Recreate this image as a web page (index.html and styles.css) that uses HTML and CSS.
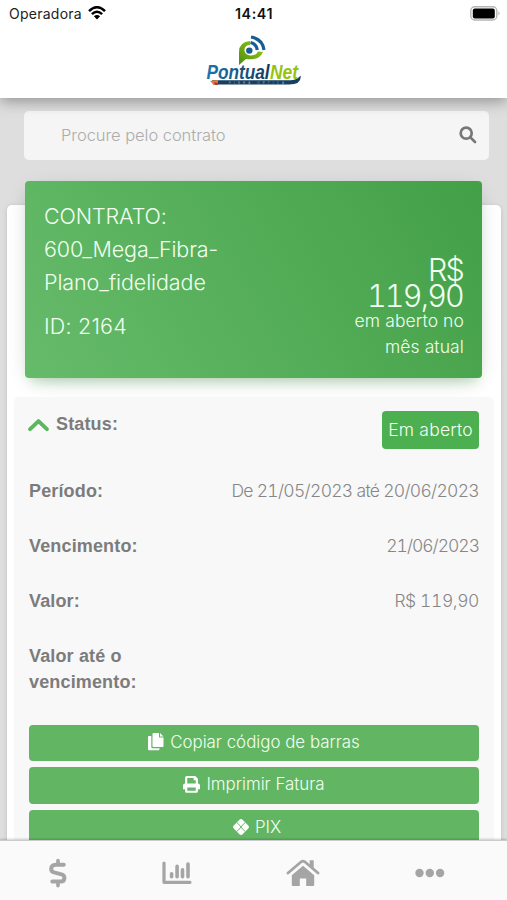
FILE: index.html
```html
<!DOCTYPE html>
<html lang="pt-BR">
<head>
<meta charset="utf-8">
<title>PontualNet</title>
<link rel="stylesheet" href="styles.css">
</head>
<body>
<div class="app">
  <header class="header">
    <div class="statusbar">
      <div class="carrier"><span>Operadora</span>
        <svg class="wifi" viewBox="0 0 18 14"><path d="M1 5.2Q9-2.6 17 5.2M3.9 8.1Q9 3.3 14.1 8.1" fill="none" stroke="#000" stroke-width="2.5"/><path d="M5.9 10.3Q9 7.8 12.1 10.3L9 13.5Z"/></svg>
      </div>
      <div class="clock">14:41</div>
      <div class="battery-slot"><svg class="battery" viewBox="0 0 31 15"><rect x=".8" y=".8" width="26" height="13.2" rx="4" fill="#fff" stroke="#b5b5b5" stroke-width="1.4"/><rect x="2.8" y="2.6" width="22" height="9.8" rx="2"/><path d="M28.5 5.2Q30.6 7.3 28.5 9.6Z" fill="#aaa"/></svg></div>
    </div>
    <svg class="logo" viewBox="0 0 98 52">
      <defs>
        <linearGradient id="leaf" x1="0" y1="1" x2="1" y2="0"><stop offset="0" stop-color="#4b8d12"/><stop offset="1" stop-color="#a2cc14"/></linearGradient>
        <linearGradient id="name" x1="0" y1="0" x2="1" y2="0"><stop offset="0" stop-color="#1b76ad"/><stop offset="1" stop-color="#143a5d"/></linearGradient>
      </defs>
      <path d="M45 6Q34 7 34 17V30L41 24Q54 26 58 17L53 16.5Q51 21 45 20.5Q39 19 39.5 14.5Q40 10 45 10Z" fill="url(#leaf)"/>
      <circle cx="44.3" cy="15.6" r="3.2" fill="#155d92"/>
      <path d="M45.5 7.5Q51.5 9 52.3 15M46 2Q57.5 4 59 15" fill="none" stroke="#155d92" stroke-width="3.2"/>
      <path d="M7 45.2H86Q93 44.5 95.5 40.5Q97 49.5 84 49.5H8Z" fill="#173f61"/>
      <text class="logo-name" x="1.5" y="44" textLength="63" lengthAdjust="spacingAndGlyphs" fill="url(#name)">Pontual</text>
      <text class="logo-name" x="65" y="44" textLength="28" lengthAdjust="spacingAndGlyphs" fill="#96c30c">Net</text>
      <path d="M5 46L13 45V50L8 49Z" fill="#ed7b29"/><path d="M9 47L13 48V50H10Z" fill="#c53328"/>
      <text class="logo-tag" x="24" y="48.8" textLength="55">FIBRA OPTICA</text>
    </svg>
  </header>

  <main class="content">
    <div class="search"><span class="placeholder">Procure pelo contrato</span>
      <svg class="search-icon" viewBox="0 0 18 18"><circle cx="7.2" cy="7.2" r="5.5"/><path d="M11.4 11.4L16 16"/></svg>
    </div>
    <section class="card">
      <div class="contract">
        <div class="contract-info">
          <p class="contract-name">CONTRATO:<br>600_Mega_Fibra-<br>Plano_fidelidade</p>
          <p class="contract-id">ID: 2164</p>
        </div>
        <div class="contract-due">
          <p class="amount">R$<br>119,90</p>
          <p class="due-note">em aberto no<br>mês atual</p>
        </div>
      </div>
      <div class="invoice">
        <div class="row row-status">
          <div class="status-label"><svg class="chevron" viewBox="0 0 22 14"><path d="M2.2 11.4L11 2.9L19.8 11.4"/></svg><b class="label">Status:</b></div>
          <span class="badge">Em aberto</span>
        </div>
        <div class="row"><b class="label">Período:</b><span class="value period">De 21/05/2023 até 20/06/2023</span></div>
        <div class="row"><b class="label">Vencimento:</b><span class="value due-date">21/06/2023</span></div>
        <div class="row"><b class="label">Valor:</b><span class="value">R$ 119,90</span></div>
        <div class="row row-tall"><b class="label">Valor até o<br>vencimento:</b></div>
        <div class="actions">
          <button class="action"><svg class="i-copy" viewBox="0 0 16 18"><path d="M5.5 0H11V4.5H15.5V13Q15.5 14 14.5 14H5.5Q4.5 14 4.5 13V1Q4.5 0 5.5 0ZM12 0L15.5 3.5H12ZM0 4Q0 3 1 3H3.3V14Q3.3 15.2 4.5 15.2H11.5V16.3Q11.5 17.3 10.5 17.3H1Q0 17.3 0 16.3Z"/></svg><span>Copiar código de barras</span></button>
          <button class="action"><svg class="i-print" viewBox="0 0 18 18"><path fill-rule="evenodd" d="M2.2 8V2Q2.2 0 4 0H13L15.8 2.8V8Q18 8 18 10V14H15.8V16.2Q15.8 17.8 14.2 17.8H3.8Q2.2 17.8 2.2 16.2V14H0V10Q0 8 2.2 8ZM4.5 2.2V8H13.5V4.5H11.3V2.2ZM4.5 12.3V15.6H13.5V12.3Z"/></svg><span>Imprimir Fatura</span></button>
          <button class="action"><svg class="i-pix" viewBox="0 0 17 17"><path d="M8.5 0Q9.5 0 10.2.8L16.2 6.8Q17.7 8.5 16.2 10.2L10.2 16.2Q8.5 17.7 6.8 16.2L.8 10.2Q-.7 8.5.8 6.8L6.8.8Q7.5 0 8.5 0Z"/><path class="cross" d="M3.9 3.9Q5.3 4.2 8.5 8.5Q11.7 4.2 13.1 3.9M3.9 13.1Q5.3 12.8 8.5 8.5Q11.7 12.8 13.1 13.1"/></svg><span>PIX</span></button>
        </div>
      </div>
    </section>
  </main>

  <nav class="tabs">
    <svg class="tab-money" viewBox="0 0 18 30"><path d="M14.8 6.8H7Q2.2 7 2.2 11Q2.2 13.7 5 14.4L12.5 16.4Q15.4 17.2 15.4 20Q15.4 23.6 11.5 23.6H3.3" fill="none" stroke="#a5a5a5" stroke-width="4" stroke-linecap="round" stroke-linejoin="round"/><path d="M9 2.5V6M9 24V27.8" stroke="#a5a5a5" stroke-width="3.6" stroke-linecap="round"/></svg>
    <svg class="tab-chart" viewBox="0 0 30 24"><path d="M2 2V21.3H28" fill="none" stroke="#a5a5a5" stroke-width="3.2" stroke-linecap="round" stroke-linejoin="round"/><path d="M9.6 12.7V15.7M15.1 5.2V15.7M20.5 8.8V15.7M26 3V15.7" stroke="#a5a5a5" stroke-width="3.6" stroke-linecap="round"/></svg>
    <svg class="tab-home" viewBox="0 0 34 28"><path d="M2 14L15.2 2.8Q17 1.4 18.8 2.8L32 14" fill="none" stroke="#a5a5a5" stroke-width="2.8" stroke-linecap="round"/><path d="M23.7 1.2H27.7V9.5L23.7 6.1ZM17 6.8L28.2 16.3V26Q28.2 27 27.2 27H20.2V19.5H13.8V27H6.8Q5.8 27 5.8 26V16.3Z" fill="#a5a5a5"/></svg>
    <svg class="tab-more" viewBox="0 0 30 10"><g fill="#a5a5a5"><circle cx="4.5" cy="5" r="4.2"/><circle cx="14.8" cy="5" r="4.2"/><circle cx="25.1" cy="5" r="4.2"/></g></svg>
  </nav>
</div>
</body>
</html>
```
FILE: styles.css
```css
* { box-sizing: border-box; }
body { margin: 0; font-family: Inter, "Liberation Sans", sans-serif; font-weight: 300; }
p { margin: 0; }
svg { display: block; flex: none; }
.app { height: 900px; width: 507px; display: flex; flex-direction: column; overflow: hidden; background: #dedede; }

.header { height: 98px; flex: none; background: #fff; box-shadow: 0 3px 14px rgba(0,0,0,.36); z-index: 2; display: flex; flex-direction: column; align-items: center; }
.statusbar { width: 100%; height: 27px; display: grid; grid-template-columns: 1fr auto 1fr; align-items: center; padding: 0 6px 0 9px; font-weight: 400; font-size: 14px; color: #222; }
.carrier { display: flex; align-items: center; gap: 6px; letter-spacing: .25px; }
.wifi { width: 18px; height: 14px; margin-top: -2px; }
.clock { font-weight: 600; font-size: 14.3px; letter-spacing: .6px; color: #111; transform: translateX(-1px); }
.battery-slot { display: flex; justify-content: flex-end; }
.battery { width: 31px; height: 15px; }
.logo { width: 98px; height: 52px; margin-top: 8px; }
.logo-name { font: italic bold 20px "Liberation Sans", sans-serif; }
.logo-tag { font: 3px "Liberation Sans", sans-serif; fill: #8daabd; }

.content { flex: 1; min-height: 0; overflow: hidden; padding: 13px 7px 0; }
.search { height: 49px; margin: 0 11px 0 17px; padding: 0 12px 0 37px; border-radius: 5px; background: #f5f5f5; display: flex; align-items: center; justify-content: space-between; }
.placeholder { color: #acacac; font-size: 16.5px; letter-spacing: -.05px; margin-top: -2px; }
.search-icon { width: 18px; height: 18px; margin-top: -1px; fill: none; stroke: #777; stroke-width: 2.7; stroke-linecap: round; }

.card { margin-top: 45px; height: 700px; width: 494px; background: #fff; border-radius: 5px; padding: 0 7px; box-shadow: 0 1px 5px rgba(0,0,0,.14); }
.contract { margin: 0 11px; position: relative; top: -24px; height: 197px; width: 457px; padding: 19px 18px 0 19px; border-radius: 4px; color: #f0fff0; background: linear-gradient(60deg, #66bb6a, #43a047); box-shadow: 0 5px 24px -8px rgba(0,0,0,.2), 0 8px 12px -5px rgba(76,175,80,.35); display: flex; justify-content: space-between; }
.contract-name { font-size: 21.5px; line-height: 33px; letter-spacing: -.1px; }
.contract-id { font-size: 21.5px; line-height: 33px; margin-top: 11px; letter-spacing: .2px; }
.contract-due { padding-top: 57px; text-align: right; }
.amount { font-size: 30.5px; line-height: 26px; font-variant-numeric: tabular-nums; letter-spacing: -1.8px; padding-right: 1px; }
.due-note { font-size: 17.5px; line-height: 25.6px; letter-spacing: .1px; margin-top: -1px; }

.invoice { margin-top: -5px; height: 500px; background: #f8f8f8; border-radius: 5px; padding: 14px 15px 0; }
.row { display: flex; justify-content: space-between; height: 55px; line-height: 26px; }
.row-status { height: 67px; }
.row-tall { height: 81.5px; }
.status-label { display: flex; align-items: flex-start; gap: 7px; margin-left: -1px; }
.chevron { width: 21px; height: 14px; margin-top: 7px; fill: none; stroke: #5cb55f; stroke-width: 4; stroke-linecap: round; stroke-linejoin: round; }
.label { font: bold 18px/26px "Liberation Sans", sans-serif; letter-spacing: .15px; color: #7c7c7c; }
.value { font-size: 17.5px; color: #868686; font-variant-numeric: tabular-nums; letter-spacing: -.4px; }
.period { letter-spacing: -.7px; }
.due-date { letter-spacing: -1px; }
.badge { height: 38px; width: 97px; line-height: 38px; border-radius: 4px; text-align: center; background: #4caf50; color: #f3fff3; font-size: 17.5px; letter-spacing: .2px; white-space: nowrap; }
.actions { display: grid; gap: 6px; width: 450px; }
.action { font: 300 16.9px/34px Inter, sans-serif; height: 36.6px; padding: 0 0 2px; border: 0; border-radius: 4px; background: #62b663; color: #f0fff0; display: flex; justify-content: center; align-items: center; gap: 6px; }
.action path { fill: #fff; }
.action .cross { fill: none; stroke: #62b663; stroke-width: 1; }
.i-copy { width: 16px; height: 18px; }
.i-print { width: 17px; height: 17px; }
.i-pix { width: 16px; height: 16px; margin-left: 6px; }

.tabs { height: 60px; flex: none; z-index: 2; background: #fafafa; border-top: 1px solid #ccc; box-shadow: 0 -1px 2px rgba(0,0,0,.2); display: flex; align-items: center; padding: 4px 62px 0 49px; justify-content: space-between; }
.tab-money { width: 18px; height: 30px; }
.tab-chart { width: 30px; height: 24px; }
.tab-home { width: 34px; height: 28px; }
.tab-more { width: 30px; height: 10px; }
```
